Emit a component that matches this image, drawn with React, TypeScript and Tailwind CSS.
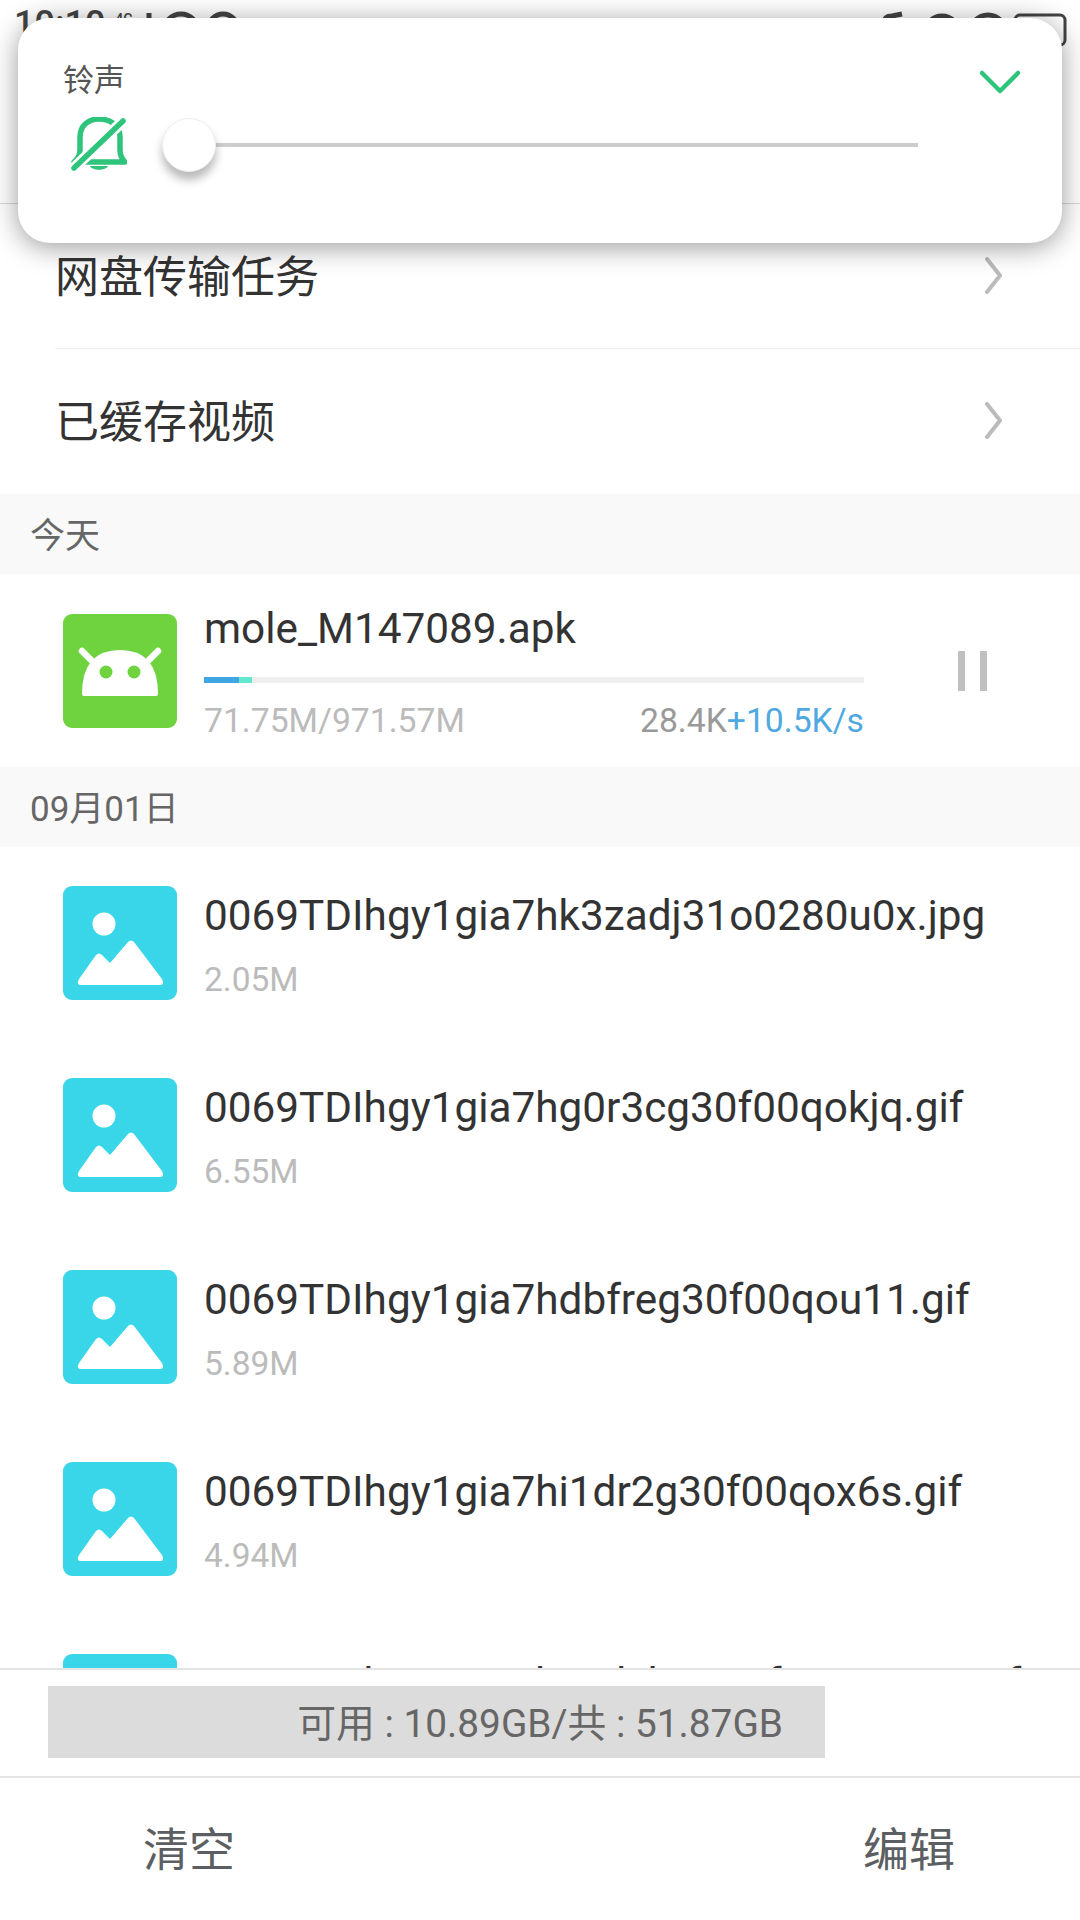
const FILES = [
  { name: "0069TDIhgy1gia7hk3zadj31o0280u0x.jpg", size: "2.05M" },
  { name: "0069TDIhgy1gia7hg0r3cg30f00qokjq.gif", size: "6.55M" },
  { name: "0069TDIhgy1gia7hdbfreg30f00qou11.gif", size: "5.89M" },
  { name: "0069TDIhgy1gia7hi1dr2g30f00qox6s.gif", size: "4.94M" },
  { name: "0069TDIhgy1gia7hazdsb1g30f00qomn6.gif", size: "3.12M" },
];

const FONT = "font-['Roboto','Noto_Sans_CJK_SC',sans-serif]";

function ImageIcon() {
  return (
    <div className="w-[114px] h-[114px] shrink-0 rounded-[9px] bg-[#38d6e8]">
      <svg viewBox="0 0 114 114" className="w-full h-full">
        <circle cx="41" cy="38" r="11.5" fill="#fff" />
        <path
          d="M16 93 L33 69 Q36 66 39 69 L47 77 L65 56 Q68 53 71 56 L99 93 Q102 99 97 99 L18 99 Q13 99 16 93 Z"
          fill="#fff"
        />
      </svg>
    </div>
  );
}

function AndroidIcon() {
  return (
    <div className="w-[114px] h-[114px] shrink-0 rounded-[9px] bg-[#6fd33f]">
      <svg viewBox="0 0 114 114" className="w-full h-full">
        <path d="M19 37 L31 49 M95 37 L83 49" stroke="#fff" strokeWidth="6.5" strokeLinecap="round" />
        <path d="M19 80 Q19 36 57 36 Q95 36 95 80 Q95 82 93 82 L21 82 Q19 82 19 80 Z" fill="#fff" />
        <circle cx="43" cy="58" r="6.5" fill="#6fd33f" />
        <circle cx="71" cy="58" r="6.5" fill="#6fd33f" />
      </svg>
    </div>
  );
}

function BellOff() {
  return (
    <svg viewBox="0 0 56 54" className="w-[56px] h-[54px]" fill="none" strokeLinecap="round" strokeLinejoin="round">
      <path d="M3 45 Q9 40 9 33 V20 C9 8 18 2 28 2 C39 2 49 8 49 20 V33 Q49 40 54 45 Z" stroke="#2fc47c" strokeWidth="5.5" />
      <path d="M19 49 H37 C35 54 21 54 19 49 Z" fill="#2fc47c" />
      <path d="M3 51 L52 4" stroke="#fff" strokeWidth="11" strokeLinecap="butt" />
      <path d="M3 51 L52 4" stroke="#2fc47c" strokeWidth="5.5" />
    </svg>
  );
}

function RowChevron() {
  return (
    <svg viewBox="0 0 17 37" className="w-[17px] h-[37px] mb-[5px]" fill="none" stroke="#bbbbbb" strokeWidth="4" strokeLinecap="round" strokeLinejoin="round">
      <path d="M2 2 L15 18.5 L2 35" />
    </svg>
  );
}

function StatusBar() {
  return (
    <div className="h-[50px] pl-[14px] pr-[12px] pt-[3px] flex justify-between text-[#444]">
      <div className="flex items-start">
        <span className="text-[36px] leading-[42px] font-medium">10:10</span>
        <span className="text-[14px] leading-[16px] font-medium ml-[10px] mt-[8px]">4G</span>
        <svg viewBox="0 0 100 36" className="w-[100px] h-[36px] ml-[12px] mt-[8px]" fill="none" stroke="#444" strokeWidth="5">
          <path d="M4 2 V30" />
          <circle cx="36" cy="20" r="17" />
          <circle cx="78" cy="18" r="15" />
        </svg>
      </div>
      <svg viewBox="0 0 190 36" className="w-[190px] h-[36px] mt-[8px]" fill="none" stroke="#444" strokeWidth="5">
        <path d="M6 26 V12 Q6 5 14 5 L24 3" />
        <circle cx="64" cy="22" r="17" />
        <circle cx="110" cy="22" r="18" />
        <rect x="137" y="4" width="50" height="30" rx="5" strokeWidth="3" />
      </svg>
    </div>
  );
}

function Section({ label }: { label: string }) {
  return (
    <div className="h-[80px] shrink-0 bg-[#f9f9f9] pl-[30px] pt-[7px] flex items-center text-[35px] text-[#666]">{label}</div>
  );
}

function NavRow({ label, divider }: { label: string; divider?: boolean }) {
  return (
    <div className={`h-[145px] shrink-0 ml-[55px] pr-[78px] pt-[3px] flex items-center justify-between ${divider ? "border-b border-[#eeeeee]" : ""}`}>
      <span className="text-[44px] text-[#333]">{label}</span>
      <RowChevron />
    </div>
  );
}

function FileRow({ name, size }: { name: string; size: string }) {
  return (
    <div className="h-[192px] shrink-0 pl-[63px] flex items-center gap-[27px]">
      <ImageIcon />
      <div className="flex flex-col pt-[5px]">
        <div className="text-[42.3px] leading-[50px] text-[#333] whitespace-nowrap">{name}</div>
        <div className="text-[33.5px] leading-[40px] mt-[19px] text-[#bbb]">{size}</div>
      </div>
    </div>
  );
}

export default function App() {
  return (
    <div className={`${FONT} w-[1080px] h-[1920px] relative overflow-hidden bg-white flex flex-col`}>
      {/* header behind the volume panel */}
      <div className="h-[204px] shrink-0 border-b border-[#d8d8d8] bg-white">
        <StatusBar />
      </div>

      <div className="flex-1 min-h-0 overflow-hidden flex flex-col">
        <NavRow label="网盘传输任务" divider />
        <NavRow label="已缓存视频" />
        <Section label="今天" />

        <div className="h-[193px] shrink-0 pl-[63px] pt-[30px] flex items-start gap-[27px]">
          <div className="mt-[10px]">
            <AndroidIcon />
          </div>
          <div className="w-[660px]">
            <div className="text-[42.3px] leading-[50px] text-[#333]">mole_M147089.apk</div>
            <div className="h-[6px] mt-[23px] bg-[#eeeeee] flex">
              <div className="w-[35px] bg-[#3fa5e3]" />
              <div className="w-[13px] bg-[#62e8cf]" />
            </div>
            <div className="flex justify-between text-[33.7px] leading-[40px] mt-[18px]">
              <span className="text-[#bbb]">71.75M/971.57M</span>
              <span className="text-[#999]">
                28.4K<span className="text-[#4fa8e0]">+10.5K/s</span>
              </span>
            </div>
          </div>
          <div className="ml-[67px] mt-[47px] flex gap-[15px]">
            <div className="w-[7px] h-[40px] bg-[#c0c0c0]" />
            <div className="w-[7px] h-[40px] bg-[#c0c0c0]" />
          </div>
        </div>

        <Section label="09月01日" />
        {FILES.map((f) => (
          <FileRow key={f.name} name={f.name} size={f.size} />
        ))}
      </div>

      <div className="shrink-0 bg-white">
        <div className="h-[108px] border-t-2 border-[#e4e4e4] pl-[48px] pt-[16px]">
          <div className="w-[777px] h-[72px] pt-[5px] bg-[#dcdcdc] flex items-center justify-end pr-[42px] text-[38.8px] text-[#666]">
            可用 : 10.89GB/共 : 51.87GB
          </div>
        </div>
        <div className="h-[144px] pt-[2px] border-t-2 border-[#e4e4e4] flex items-center justify-between pl-[143px] pr-[125px] text-[46px] text-[#5c5f62]">
          <span>清空</span>
          <span>编辑</span>
        </div>
      </div>

      {/* volume panel */}
      <div className="absolute left-[18px] top-[18px] w-[1044px] h-[225px] rounded-[32px] bg-white shadow-[0_4px_28px_rgba(0,0,0,0.4)]">
        <div className="absolute left-[45px] top-[43px] text-[31px] leading-[40px] text-[#555]">铃声</div>
        <svg viewBox="0 0 40 24" className="absolute left-[962px] top-[52px] w-[40px] h-[24px]" fill="none" stroke="#2fc47c" strokeWidth="4.5" strokeLinecap="round" strokeLinejoin="round">
          <path d="M2 3 L20 21 L38 3" />
        </svg>
        <div className="absolute left-[53px] top-[99px]">
          <BellOff />
        </div>
        <div className="absolute left-[197px] top-[125px] w-[703px] h-[4px] bg-[#cdcdcd]" />
        <div className="absolute left-[144px] top-[100px] w-[54px] h-[54px] rounded-full bg-white border border-[#eee] shadow-[0_8px_10px_rgba(0,0,0,0.28)]" />
      </div>
    </div>
  );
}
